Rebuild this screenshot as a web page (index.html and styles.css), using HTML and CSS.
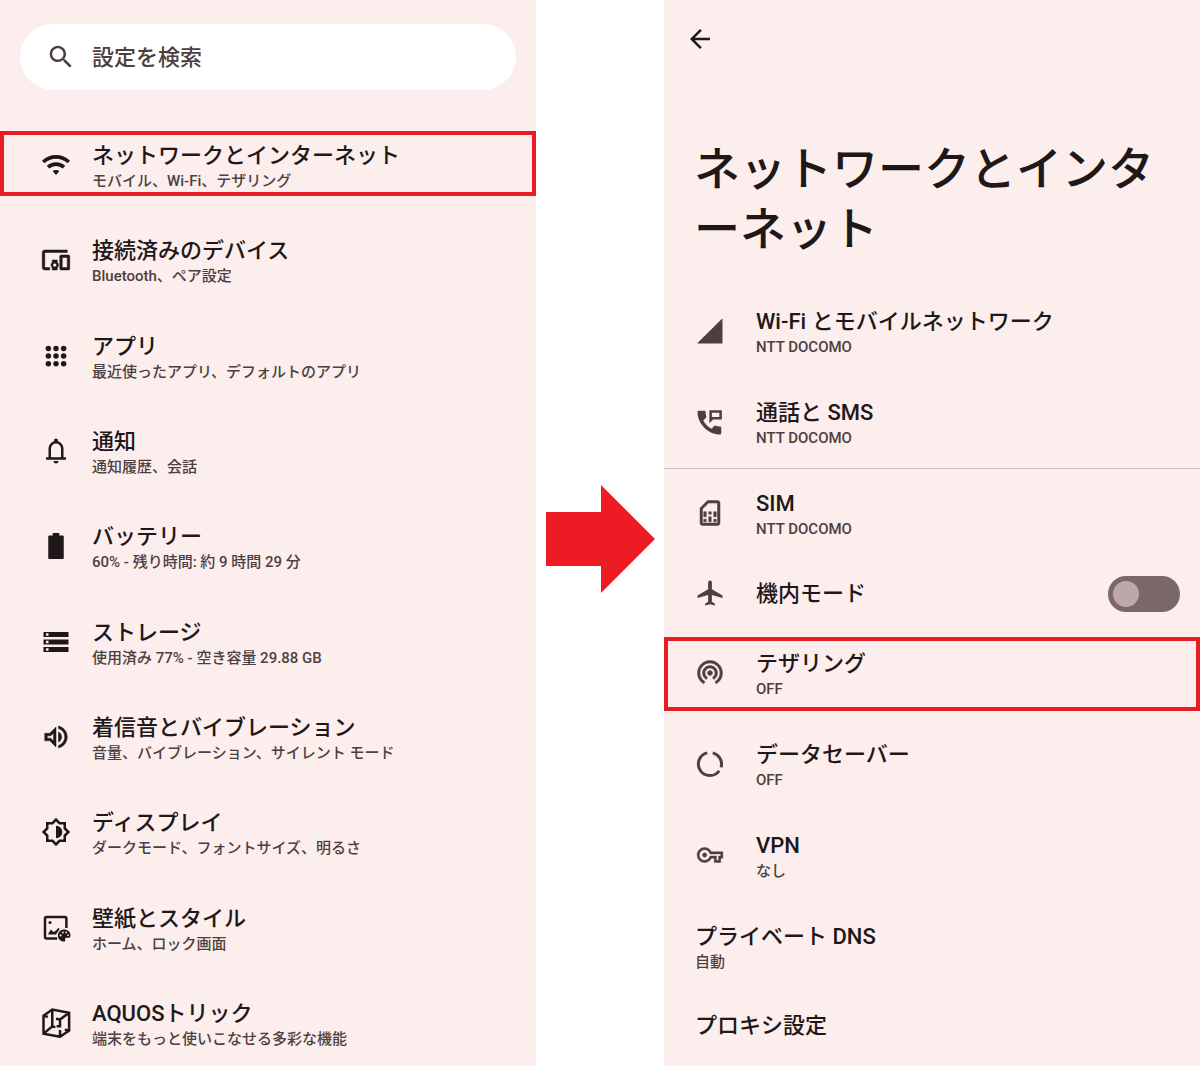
FILE: index.html
```html
<!DOCTYPE html>
<html lang="ja">
<head>
    <meta charset="UTF-8">
    <meta name="viewport" content="width=device-width, initial-scale=1.0">
    <title>設定</title>
    <link rel="stylesheet" href="styles.css">
</head>
<body>
    <main class="guide">

        <!-- Settings top -->
        <section class="screen screen-settings">
            <label class="search">
                <svg class="icon" viewBox="0 0 24 24"><path d="M15.5 14h-.79l-.28-.27C15.41 12.59 16 11.11 16 9.5 16 5.91 13.09 3 9.5 3S3 5.91 3 9.5 5.91 16 9.5 16c1.61 0 3.09-.59 4.23-1.57l.27.28v.79l5 4.99L20.49 19l-4.99-5zm-6 0C7.01 14 5 11.99 5 9.5S7.01 5 9.5 5 14 7.01 14 9.5 11.99 14 9.5 14z"/></svg>
                <input type="search" class="search-input" placeholder="設定を検索" aria-label="設定を検索">
            </label>

            <nav class="menu">
                <a href="#" class="item highlight">
                    <svg class="icon" viewBox="0 0 24 24"><path class="line wide" d="M1.8 9.6Q6 5.5 12 5.5T22.2 9.6M5.6 13.7Q8.3 11.2 12 11.2T18.4 13.7"/><path d="M12 15.9c-1.2 0-2.1.4-2.6 1L12 20l2.6-3.1c-.5-.6-1.4-1-2.6-1z"/></svg>
                    <span class="text">
                        <span class="title">ネットワークとインターネット</span>
                        <span class="summary">モバイル、Wi-Fi、テザリング</span>
                    </span>
                </a>
                <a href="#" class="item">
                    <svg class="icon" viewBox="0 0 24 24"><path class="bold" d="M3 6h18V4H3c-1.1 0-2 .9-2 2v12c0 1.1.9 2 2 2h4v-2H3V6zm10 6H9v1.78c-.61.55-1 1.33-1 2.22s.39 1.67 1 2.22V20h4v-1.78c.61-.55 1-1.34 1-2.22s-.39-1.67-1-2.22V12zm-2 5.5c-.83 0-1.5-.67-1.5-1.5s.67-1.5 1.5-1.5 1.5.67 1.5 1.5-.67 1.5-1.5 1.5zM22 8h-6c-.5 0-1 .5-1 1v10c0 .5.5 1 1 1h6c.5 0 1-.5 1-1V9c0-.5-.5-1-1-1zm-1 10h-4v-8h4v8z"/></svg>
                    <span class="text">
                        <span class="title">接続済みのデバイス</span>
                        <span class="summary">Bluetooth、ペア設定</span>
                    </span>
                </a>
                <a href="#" class="item">
                    <svg class="icon" viewBox="0 0 24 24"><circle cx="5.9" cy="5.9" r="2.2"/><circle cx="12" cy="5.9" r="2.2"/><circle cx="18.1" cy="5.9" r="2.2"/><circle cx="5.9" cy="12" r="2.2"/><circle cx="12" cy="12" r="2.2"/><circle cx="18.1" cy="12" r="2.2"/><circle cx="5.9" cy="18.1" r="2.2"/><circle cx="12" cy="18.1" r="2.2"/><circle cx="18.1" cy="18.1" r="2.2"/></svg>
                    <span class="text">
                        <span class="title">アプリ</span>
                        <span class="summary">最近使ったアプリ、デフォルトのアプリ</span>
                    </span>
                </a>
                <a href="#" class="item">
                    <svg class="icon" viewBox="0 0 24 24"><path d="M4 19v-2h2v-7q0-2.075 1.25-3.687Q8.5 4.7 10.5 4.2v-.7q0-.625.438-1.062Q11.375 2 12 2t1.063.438Q13.5 2.875 13.5 3.5v.7q2 .5 3.25 2.113Q18 7.925 18 10v7h2v2Zm8 3q-.825 0-1.412-.587Q10 20.825 10 20h4q0 .825-.587 1.413Q12.825 22 12 22Zm-4-5h8v-7q0-1.65-1.175-2.825Q13.65 6 12 6q-1.65 0-2.825 1.175Q8 8.35 8 10Z"/></svg>
                    <span class="text">
                        <span class="title">通知</span>
                        <span class="summary">通知履歴、会話</span>
                    </span>
                </a>
                <a href="#" class="item">
                    <svg class="icon" viewBox="0 0 24 24"><path d="M17.4 3.500h-2.800V1.500H9.400v2H6.600c-.5 0-.8.3-.8.8v17.200c0 .5.3.8.8.8h10.800c.5 0 .8-.3.8-.8V4.300c0-.5-.3-.8-.8-.8z"/></svg>
                    <span class="text">
                        <span class="title">バッテリー</span>
                        <span class="summary">60% - 残り時間: 約 9 時間 29 分</span>
                    </span>
                </a>
                <a href="#" class="item">
                    <svg class="icon" viewBox="0 0 24 24"><path d="M2 20h20v-4H2v4zm2-3h2v2H4v-2zM2 4v4h20V4H2zm4 3H4V5h2v2zm-4 7h20v-4H2v4zm2-3h2v2H4v-2z"/></svg>
                    <span class="text">
                        <span class="title">ストレージ</span>
                        <span class="summary">使用済み 77% - 空き容量 29.88 GB</span>
                    </span>
                </a>
                <a href="#" class="item">
                    <svg class="icon" viewBox="0 0 24 24"><path class="bold" d="M3 9v6h4l5 5V4L7 9H3zm7-.17v6.34L7.83 13H5v-2h2.83L10 8.83zM16.5 12c0-1.77-1.02-3.29-2.5-4.03v8.05c1.48-.73 2.5-2.25 2.5-4.02zM14 3.23v2.06c2.89.86 5 3.54 5 6.71s-2.11 5.85-5 6.71v2.06c4.01-.91 7-4.49 7-8.77 0-4.28-2.99-7.86-7-8.77z"/></svg>
                    <span class="text">
                        <span class="title">着信音とバイブレーション</span>
                        <span class="summary">音量、バイブレーション、サイレント モード</span>
                    </span>
                </a>
                <a href="#" class="item">
                    <svg class="icon" viewBox="0 0 24 24"><path d="M20 8.69V4h-4.69L12 .69 8.69 4H4v4.69L.69 12 4 15.31V20h4.69L12 23.31 15.31 20H20v-4.69L23.31 12 20 8.69zm-2 5.79V18h-3.52L12 20.48 9.52 18H6v-3.52L3.52 12 6 9.52V6h3.52L12 3.52 14.48 6H18v3.52L20.48 12 18 14.48z"/><path d="M12 7v10c2.76 0 5-2.24 5-5s-2.24-5-5-5z"/></svg>
                    <span class="text">
                        <span class="title">ディスプレイ</span>
                        <span class="summary">ダークモード、フォントサイズ、明るさ</span>
                    </span>
                </a>
                <a href="#" class="item">
                    <svg class="icon" viewBox="0 0 24 24"><path class="line" d="M13 20.3H4.5q-1.3 0-1.3-1.3V4.5q0-1.3 1.3-1.3H19q1.300 0 1.300 1.300V12"/><circle cx="7.2" cy="7.5" r="1.200"/><path d="M5.500 17.200l2.300-4 2.300 1.900 1.700-1 2.200-2.300.9.900-2.900 4.500z"/><path fill-rule="evenodd" d="M18.600 13.200c-2.900 0-5.100 2.100-5.100 4.800s2.200 4.800 4.800 4.800c1.100 0 1.300-.8 1-1.500-.3-.9.200-1.500 1.200-1.500h1.400c1 0 1.700-.8 1.700-1.900 0-2.600-2.200-4.700-5-4.700zM15 17.200h1.400v1.400H15zM16.900 14.900h1.300v1.300h-1.300zM19.500 14.900h1.300v1.300h-1.300zM21 17.100h1.200v1.200H21z"/></svg>
                    <span class="text">
                        <span class="title">壁紙とスタイル</span>
                        <span class="summary">ホーム、ロック画面</span>
                    </span>
                </a>
                <a href="#" class="item">
                    <svg class="icon" viewBox="0 0 24 24"><path class="line" d="M2 6.200L9 1.200 22.500 3.800V18L15.200 23 2 20.500zM22.500 3.800L15.200 9.200V14.500H12.500M15.200 23V17.500M9 1.200V14.800L2 20.500M9 14.800L11.500 15.300M2 6.200L5.500 7M12 8.600L15.200 9.200M22.500 18L19 17.300"/></svg>
                    <span class="text">
                        <span class="title">AQUOSトリック</span>
                        <span class="summary">端末をもっと使いこなせる多彩な機能</span>
                    </span>
                </a>
            </nav>
        </section>

        <div class="step">
            <svg class="step-arrow" viewBox="0 0 109 108"><path d="M0 27H55V0L109 54 55 108V81H0z"/></svg>
        </div>

        <!-- Network and internet -->
        <section class="screen screen-network">
            <button type="button" class="back" aria-label="戻る">
                <svg class="icon" viewBox="0 0 24 24"><path d="M20 11H7.83l5.59-5.59L12 4l-8 8 8 8 1.41-1.41L7.83 13H20v-2z"/></svg>
            </button>
            <h1 class="heading">ネットワークとインターネット</h1>

            <div class="list">
                <a href="#" class="row">
                    <svg class="icon" viewBox="0 0 24 24"><path d="M2.500 22H21.300q.7 0 .7-.7V2.500q0-.8-.6-.2L2.200 21.400q-.5.600.3.600z"/></svg>
                    <span class="text">
                        <span class="title">Wi-Fi とモバイルネットワーク</span>
                        <span class="summary">NTT DOCOMO</span>
                    </span>
                </a>
                <a href="#" class="row divided">
                    <svg class="icon" viewBox="0 0 24 24"><path fill-rule="evenodd" d="M20 15.500c-1.250 0-2.450-.2-3.570-.57-.35-.11-.74-.03-1.020.24l-2.200 2.200c-2.830-1.440-5.150-3.750-6.590-6.580l2.200-2.210c.28-.27.36-.66.25-1.010C8.700 6.450 8.500 5.250 8.500 4c0-.55-.45-1-1-1H3c-.55 0-1 .45-1 1 0 9.390 8.610 18 18 18 .55 0 1-.45 1-1v-4.500c0-.55-.45-1-1-1zM11.500 2.500v10.500l3-3h7V2.500h-10zM13.500 4.500h6v3.500h-6z"/></svg>
                    <span class="text">
                        <span class="title">通話と SMS</span>
                        <span class="summary">NTT DOCOMO</span>
                    </span>
                </a>
                <a href="#" class="row">
                    <svg class="icon" viewBox="0 0 24 24"><path class="bold" d="M18 2h-8L4 8v12c0 1.1.9 2 2 2h12c1.1 0 2-.9 2-2V4c0-1.1-.9-2-2-2zm0 2v16H6V8.83L10.83 4H18zM7 17h2v2H7zM15 17h2v2h-2zM7 11h2v4H7zM11 15h2v4h-2zM11 11h2v2h-2zM15 11h2v4h-2z"/></svg>
                    <span class="text">
                        <span class="title">SIM</span>
                        <span class="summary">NTT DOCOMO</span>
                    </span>
                </a>
                <label class="row single">
                    <svg class="icon" viewBox="0 0 24 24"><path d="M22 16v-2l-8.5-5V3.5c0-.83-.67-1.5-1.5-1.5s-1.5.67-1.5 1.5V9L2 14v2l8.5-2.5V19L8 20.5V22l4-1 4 1v-1.5L13.5 19v-5.5L22 16z"/></svg>
                    <span class="text">
                        <span class="title">機内モード</span>
                    </span>
                    <input type="checkbox" class="switch" role="switch">
                </label>
                <a href="#" class="row highlight">
                    <svg class="icon" viewBox="0 0 24 24"><path class="bold" d="M12 10c-1.1 0-2 .9-2 2s.9 2 2 2 2-.9 2-2-.9-2-2-2zm6 2c0-3.31-2.69-6-6-6s-6 2.69-6 6c0 2.22 1.21 4.15 3 5.19l1-1.74c-1.19-.7-2-1.97-2-3.45 0-2.21 1.79-4 4-4s4 1.79 4 4c0 1.48-.81 2.75-2 3.45l1 1.74c1.79-1.04 3-2.97 3-5.19zM12 2C6.48 2 2 6.48 2 12c0 3.7 2.01 6.92 4.99 8.65l1-1.73C5.61 17.53 4 14.96 4 12c0-4.42 3.58-8 8-8s8 3.58 8 8c0 2.96-1.61 5.53-4 6.92l1 1.73c2.99-1.73 5-4.95 5-8.65 0-5.52-4.48-10-10-10z"/></svg>
                    <span class="text">
                        <span class="title">テザリング</span>
                        <span class="summary">OFF</span>
                    </span>
                </a>
                <a href="#" class="row">
                    <svg class="icon" viewBox="0 0 24 24"><path class="line ring" d="M14.2 3.1A9.2 9.2 0 0 1 20.8 14.7M19.4 17.4A9.2 9.2 0 1 1 9.8 3.1"/></svg>
                    <span class="text">
                        <span class="title">データセーバー</span>
                        <span class="summary">OFF</span>
                    </span>
                </a>
                <a href="#" class="row">
                    <svg class="icon" viewBox="-2 -2 28 28"><path class="bold" d="M22 19h-6v-4h-2.68c-1.14 2.42-3.6 4-6.32 4-3.86 0-7-3.14-7-7s3.14-7 7-7c2.72 0 5.17 1.58 6.32 4H24v6h-2v4zm-4-2h2v-4h2v-2H11.94l-.23-.67C11.01 8.34 9.11 7 7 7c-2.76 0-5 2.24-5 5s2.24 5 5 5c2.11 0 4.01-1.34 4.71-3.33l.23-.67H18v4zM7 14c-1.1 0-2-.9-2-2s.9-2 2-2 2 .9 2 2-.9 2-2 2z"/></svg>
                    <span class="text">
                        <span class="title">VPN</span>
                        <span class="summary">なし</span>
                    </span>
                </a>
                <a href="#" class="row">
                    <span class="text">
                        <span class="title">プライベート DNS</span>
                        <span class="summary">自動</span>
                    </span>
                </a>
                <a href="#" class="row single">
                    <span class="text">
                        <span class="title">プロキシ設定</span>
                    </span>
                </a>
            </div>
        </section>

    </main>
</body>
</html>
```
FILE: styles.css
```css
* {
    box-sizing: border-box;
}
body {
    margin: 0;
    background-color: #fff;
    color: #1f1718;
    font-family: Roboto, "Noto Sans CJK JP", sans-serif;
    font-weight: 500;
}
a {
    color: inherit;
    text-decoration: none;
}
.guide {
    display: grid;
    grid-template-columns: 1fr 128px 1fr;
    min-height: 100vh;
}
.screen {
    display: flex;
    flex-direction: column;
    background-color: #fbeeec;
}
.icon {
    flex: none;
    display: block;
    width: 30px;
    height: 30px;
    fill: currentColor;
}
.line {
    fill: none;
    stroke: currentColor;
    stroke-width: 2;
}
.wide {
    stroke-width: 3;
}
.ring {
    stroke-width: 2.4;
}
.bold {
    stroke: currentColor;
    stroke-width: 0.4;
}
.text {
    flex: 1;
    display: flex;
    flex-direction: column;
}
.title {
    font-size: 22px;
    line-height: 30px;
}
.summary {
    color: #4d3f40;
    font-size: 15px;
    line-height: 20px;
}

/* Settings top */
.screen-settings {
    padding: 24px 0 12px;
}
.search {
    display: flex;
    align-items: center;
    gap: 16px;
    height: 66px;
    margin: 0 20px 41px;
    padding: 0 26px;
    border-radius: 33px;
    background-color: #fff;
    color: #4d3f40;
}
.search-input {
    flex: 1;
    min-width: 0;
    padding: 0;
    border: 0;
    outline: 0;
    background: none;
    color: inherit;
    font: inherit;
    font-size: 22px;
}
.search-input::placeholder {
    color: inherit;
    opacity: 1;
}
.menu {
    flex: 1;
    display: flex;
    flex-direction: column;
    justify-content: space-between;
}
.item {
    display: flex;
    align-items: center;
    gap: 21px;
    padding: 10px 20px 5px 41px;
}
.item .icon,
.row .icon {
    margin-bottom: 2px;
}
.item.highlight {
    padding: 6px 16px 1px 37px;
    border: 4px solid #e81c24;
}

/* Arrow between the two screens */
.step {
    display: flex;
    align-items: center;
    justify-content: center;
    padding-top: 12px;
}
.step-arrow {
    width: 109px;
    fill: #ed1c24;
}

/* Network and internet */
.screen-network {
    padding-top: 24px;
}
.back {
    align-self: flex-start;
    margin-left: 21px;
    padding: 0;
    border: 0;
    background: none;
    color: inherit;
    cursor: pointer;
}
.heading {
    margin: 85px 30px 28px;
    font-size: 46px;
    font-weight: 500;
    line-height: 60px;
    line-break: anywhere;
}
.row {
    display: flex;
    align-items: center;
    gap: 31px;
    padding: 20px 20px 21px 31px;
}
.row .icon {
    color: #4d3f40;
}
.row.divided {
    padding-bottom: 20px;
    border-bottom: 1px solid #cdbfbf;
}
.row.single {
    padding-top: 18px;
    padding-bottom: 19px;
}
.row.highlight {
    margin: 8px 0 9px;
    padding: 8px 16px 8px 27px;
    border: 4px solid #e81c24;
}
.switch {
    appearance: none;
    display: flex;
    align-items: center;
    width: 72px;
    height: 36px;
    margin: -2px 0;
    padding: 0 5px;
    border-radius: 18px;
    background-color: #7b6868;
    cursor: pointer;
}
.switch::before {
    content: "";
    width: 26px;
    height: 26px;
    border-radius: 50%;
    background-color: #bda7a8;
}
.switch:checked {
    justify-content: flex-end;
}
```
